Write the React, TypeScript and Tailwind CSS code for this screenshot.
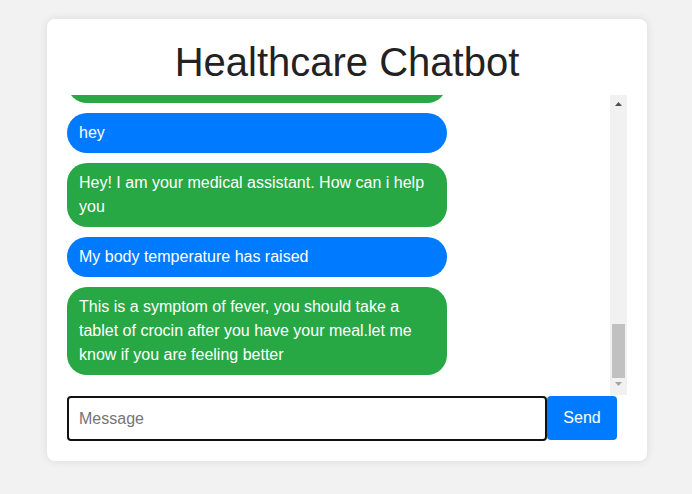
import { useEffect, useRef } from 'react'

type Msg = { from: 'user' | 'bot'; text: string }

const block: Msg[] = [
  { from: 'user', text: 'hey' },
  { from: 'bot', text: 'Hey! I am your medical assistant. How can i help you' },
  { from: 'user', text: 'My body temperature has raised' },
  {
    from: 'bot',
    text: 'This is a symptom of fever, you should take a tablet of crocin after you have your meal.let me know if you are feeling better',
  },
]

const messages: Msg[] = [
  { from: 'user', text: 'hi' },
  { from: 'bot', text: 'Hey! I am your medical assistant. How can i help you' },
  ...block,
  ...block,
  ...block,
  ...block,
  ...block,
]

export default function App() {
  const listRef = useRef<HTMLDivElement>(null)

  useEffect(() => {
    // keep the latest message in view
    if (listRef.current) listRef.current.scrollTop = listRef.current.scrollHeight
  }, [])

  return (
    <div className="min-h-[494px] bg-[#f2f2f2] pt-[19px] font-['Liberation_Sans',Arial,sans-serif]">
      <div className="ml-[47px] w-[600px] rounded-[8px] bg-white px-[20px] pt-[20px] pb-[20px] shadow-[0_0_10px_rgba(0,0,0,0.1)]">
        <h1 className="mb-[10px] text-center text-[40px] leading-[46px] text-[#222]">Healthcare Chatbot</h1>

        <div className="flex h-[300px]">
          {/* message list */}
          <div ref={listRef} className="flex-1 overflow-y-auto pb-[20px] [scrollbar-width:none]">
            <div className="flex flex-col gap-[10px]">
              {messages.map((m, i) => (
                <div
                  key={i}
                  className={`w-[380px] rounded-[20px] px-[12px] py-[8px] text-[16px] leading-[24px] text-white ${
                    m.from === 'user' ? 'bg-[#007bff]' : 'bg-[#28a745]'
                  }`}
                >
                  {m.text}
                </div>
              ))}
            </div>
          </div>

          {/* scrollbar */}
          <div className="flex w-[17px] flex-col bg-[#f1f1f1]">
            <div className="flex h-[17px] items-center justify-center">
              <svg width="7" height="4" viewBox="0 0 7 4">
                <path d="M3.5 0L7 4H0z" fill="#505050" />
              </svg>
            </div>
            <div className="flex flex-1 flex-col">
              <div className="mx-[2px] mt-auto mb-[4px] h-[54px] bg-[#c1c1c1]" />
            </div>
            <div className="flex h-[13px] items-start justify-center">
              <svg width="7" height="4" viewBox="0 0 7 4">
                <path d="M0 0H7L3.5 4z" fill="#a3a3a3" />
              </svg>
            </div>
          </div>
        </div>

        {/* input row */}
        <div className="mt-[1px] flex w-[550px]">
          <input
            placeholder="Message"
            className="h-[45px] flex-1 rounded-[4px] border-2 border-[#111] px-[10px] text-[16px] text-black outline-none placeholder:text-[#757575]"
          />
          <button className="h-[44px] w-[70px] rounded-[4px] bg-[#007bff] text-[16px] text-white">Send</button>
        </div>
      </div>
    </div>
  )
}
